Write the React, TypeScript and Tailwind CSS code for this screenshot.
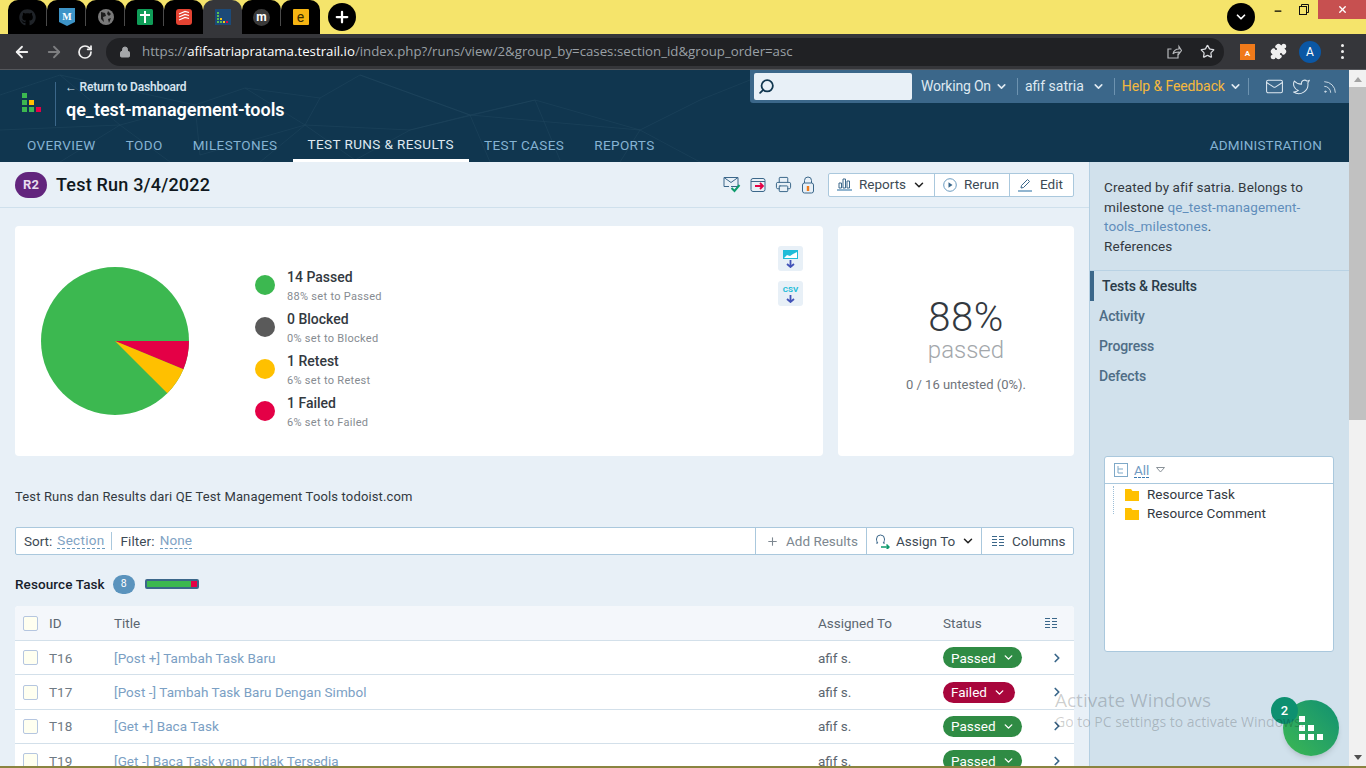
import { FaGithub } from "react-icons/fa";
import {
  ArrowLeft,
  ArrowRight,
  RotateCw,
  Lock,
  Star,
  Puzzle,
  ChevronDown,
  ChevronRight,
  Search,
  Mail,
  Twitter,
  Rss,
  Plus,
  Printer,
  Minus,
  X,
} from "lucide-react";

const sans = "font-['Roboto',sans-serif]";

const navItems = ["OVERVIEW", "TODO", "MILESTONES", "TEST RUNS & RESULTS", "TEST CASES", "REPORTS"];

const legend = [
  { title: "14 Passed", sub: "88% set to Passed", color: "bg-[#3cb850]" },
  { title: "0 Blocked", sub: "0% set to Blocked", color: "bg-[#5a5a5a]" },
  { title: "1 Retest", sub: "6% set to Retest", color: "bg-[#ffc000]" },
  { title: "1 Failed", sub: "6% set to Failed", color: "bg-[#e40046]" },
];

const rows = [
  { id: "T16", title: "[Post +] Tambah Task Baru", status: "Passed" },
  { id: "T17", title: "[Post -] Tambah Task Baru Dengan Simbol", status: "Failed" },
  { id: "T18", title: "[Get +] Baca Task", status: "Passed" },
  { id: "T19", title: "[Get -] Baca Task yang Tidak Tersedia", status: "Passed" },
];

function Tab({ children, active, sep }: { children: React.ReactNode; active?: boolean; sep?: boolean }) {
  return (
    <div
      className={
        "relative flex h-[34px] w-[39px] items-center justify-center rounded-t-[10px] " +
        (active ? "bg-[#35363a]" : "bg-black")
      }
    >
      {children}
      {sep && <span className="absolute right-0 top-[8px] h-[18px] w-px bg-[#4a4a4a]" />}
    </div>
  );
}

function TabStrip() {
  return (
    <div className="flex h-[34px] items-end bg-[#f5e46b] pl-[8px]">
      <div className="flex items-end">
        <Tab sep>
          <FaGithub className="text-[#1f2328]" size={17} />
        </Tab>
        <Tab sep>
          <svg width="16" height="18" viewBox="0 0 16 18">
            <path d="M0 0h16v14l-8 4-8-4z" fill="#3d94c8" />
            <text x="8" y="11.5" fontSize="10" fontWeight="700" fill="#fff" textAnchor="middle" fontFamily="Liberation Serif">
              M
            </text>
          </svg>
        </Tab>
        <Tab sep>
          <svg width="16" height="16" viewBox="0 0 16 16">
            <circle cx="8" cy="8" r="8" fill="#7a7a7a" />
            <path d="M3 3l4 1 1 3-3 1 1 5-3-3zM10 2l3 3-2 2-2-2zM10 10l3-1-2 5z" fill="#1c1c1c" />
          </svg>
        </Tab>
        <Tab sep>
          <svg width="16" height="16" viewBox="0 0 16 16">
            <rect width="16" height="16" rx="1.5" fill="#0f9d58" />
            <path d="M7 2h2v3h4v2H9v7H7V7H3V5h4z" fill="#fff" />
          </svg>
        </Tab>
        <Tab>
          <svg width="16" height="16" viewBox="0 0 16 16">
            <rect width="16" height="16" rx="3" fill="#e44332" />
            <path d="M3 5l6-2.5 4 1M3 8l6-2.5 4 1M3 11l6-2.5 4 1" stroke="#fff" strokeWidth="1.2" fill="none" />
          </svg>
        </Tab>
        <Tab active>
          <svg width="16" height="16" viewBox="0 0 16 16">
            <rect width="16" height="16" fill="#1c4a78" />
            <path d="M2 3h2v2H2zM2 6h2v2H2zM2 9h2v2H2zM2 12h2v2H2zM5 12h2v2H5z" fill="#5cc04e" />
            <path d="M5 9h2v2H5zM8 12h2v2H8z" fill="#f5c518" />
            <path d="M11 12h2v2h-2z" fill="#e40046" />
          </svg>
        </Tab>
        <Tab sep>
          <div className={`flex h-[17px] w-[17px] items-center justify-center rounded-full bg-[#3a3a3a] text-[12px] font-bold leading-none text-white ${sans}`}>
            m
          </div>
        </Tab>
        <Tab>
          <div className={`flex h-[16px] w-[16px] items-center justify-center rounded-[1px] bg-[#f5b412] text-[14px] leading-none text-[#3a2c00] ${sans}`}>
            e
          </div>
        </Tab>
      </div>
      <div className="mb-[3px] ml-[8px] flex h-[28px] w-[28px] items-center justify-center rounded-full bg-black">
        <Plus className="text-white" size={18} strokeWidth={3} />
      </div>
      <div className="mb-[3px] ml-auto flex h-[28px] w-[28px] items-center justify-center rounded-full bg-black">
        <ChevronDown className="text-white" size={14} strokeWidth={3} />
      </div>
      <div className="flex h-[34px] items-start">
        <div className="flex h-[22px] w-[45px] items-center justify-center text-black">
          <Minus size={10} strokeWidth={3} />
        </div>
        <div className="flex h-[19px] w-[18px] items-center">
          <svg width="10" height="11" viewBox="0 0 10 11" fill="none" stroke="#111" className="-ml-[1px]">
            <rect x="0.5" y="2.5" width="7" height="8" />
            <path d="M2.5 2.500V.5h7v8H7.500" />
          </svg>
        </div>
        <div className="flex h-[19px] w-[48px] items-center justify-center bg-[#c75050] text-white">
          <X size={11} strokeWidth={3} />
        </div>
      </div>
    </div>
  );
}

function Toolbar() {
  return (
    <div className="flex h-[36px] items-center border-b border-[#55575b] bg-[#35363a] pl-[13px] pr-[12px]">
      <ArrowLeft className="text-[#f0f0f0]" size={18} strokeWidth={2.4} />
      <ArrowRight className="ml-[14px] text-[#7d7e80]" size={18} strokeWidth={2.4} />
      <RotateCw className="ml-[14px] text-[#f0f0f0]" size={16} strokeWidth={2.6} />
      <div className="ml-[13px] flex h-[28px] w-[1118px] items-center rounded-full bg-[#202124] pl-[13px] pr-[9px] font-['Open_Sans',sans-serif] text-[13.25px]">
        <Lock className="text-[#a4a6a9]" size={12} fill="#a4a6a9" />
        <span className="ml-[11px] text-[#9aa0a6]">https://</span>
        <span className="text-white">afifsatriapratama.testrail.io</span>
        <span className="text-[#9aa0a6]">/index.php?/runs/view/2&amp;group_by=cases:section_id&amp;group_order=asc</span>
        <svg className="ml-auto" width="16" height="16" viewBox="0 0 16 16" fill="none" stroke="#b8babd" strokeWidth="1.2">
          <path d="M12 9.5V14H2V5h3.5M7 10c.5-3 2.5-5 6-5V2.5L15.5 6.5 13 10V8c-3 0-5 .5-6 2z" />
        </svg>
        <Star className="ml-[18px] text-[#dadce0]" size={15} strokeWidth={2} />
      </div>
      <div className={`ml-[16px] flex h-[16px] w-[15px] items-end justify-center bg-[#f07a1a] text-[8px] font-bold leading-[12px] text-white ${sans}`}>
        A
      </div>
      <Puzzle className="ml-[15px] text-[#f0f0f0]" size={17} fill="#f0f0f0" />
      <div className={`ml-[12px] flex h-[22px] w-[22px] items-center justify-center rounded-full bg-[#0b57a4] text-[12px] text-white ${sans}`}>
        A
      </div>
      <div className="ml-[20px] flex flex-col gap-[3px]">
        <span className="h-[3px] w-[3px] rounded-full bg-[#f0f0f0]" />
        <span className="h-[3px] w-[3px] rounded-full bg-[#f0f0f0]" />
        <span className="h-[3px] w-[3px] rounded-full bg-[#f0f0f0]" />
      </div>
    </div>
  );
}

function TopMenu() {
  return (
    <div className="flex h-[33px] w-[599px] items-center rounded-bl-[3px] bg-[#3b678a] pl-[4px] text-[14px] tracking-[-0.2px] text-[#dfe9f1]">
      <div className="flex h-[27px] w-[158px] items-center rounded-[2px] bg-[#e8f0f7] pl-[4px]">
        <Search className="-scale-x-100 text-[#10364f]" size={17} strokeWidth={2.5} />
      </div>
      <span className="ml-[9px]">Working On</span>
      <ChevronDown className="ml-[4px]" size={13} strokeWidth={3} />
      <span className="ml-[9px] h-[17px] w-px bg-[#6d93b0]" />
      <span className="ml-[7px] tracking-[0px]">afif satria</span>
      <ChevronDown className="ml-[8px]" size={13} strokeWidth={3} />
      <span className="ml-[9px] h-[17px] w-px bg-[#6d93b0]" />
      <span className="ml-[7px] tracking-[-0.1px] text-[#f5b93d]">Help &amp; Feedback</span>
      <ChevronDown className="ml-[4px]" size={13} strokeWidth={3} />
      <span className="ml-[6px] h-[17px] w-px bg-[#6d93b0]" />
      <Mail className="ml-[16px]" size={19} strokeWidth={1.3} />
      <Twitter className="ml-[8px]" size={19} strokeWidth={1.3} />
      <Rss className="ml-[11px]" size={16} strokeWidth={1.3} />
    </div>
  );
}

function PageHeader() {
  return (
    <div className={`relative h-[92px] bg-[#10364f] ${sans}`}>
      <svg className="pointer-events-none absolute left-0 top-0" width="750" height="92" fill="none" stroke="#2a5068" strokeWidth="0.6" opacity="0.55">
        <path d="M0 25L60 5 195 35 245 18 320 28 360 5 470 45 535 30 640 60 700 30 750 10M60 5L120 55 195 35 200 85 305 55 260 92M320 28L305 55 355 90 410 60 470 45 490 92M120 55L60 92M535 30L560 90M245 18L305 55 410 60 535 30M470 45L640 60 620 92M0 60L120 55 170 92M360 5L470 45M640 60L700 92" />
      </svg>
      <div className="relative flex h-[60px] justify-between">
        <div className="flex items-center pl-[22px]">
          <svg className="mt-[6px]" width="20" height="20" viewBox="0 0 20 20">
            <path d="M0 0h5v5H0zM0 7h5v5H0zM0 14h5v5H0zM7 14h5v5H7z" fill="#3cb850" />
            <path d="M7 7h5v5H7z" fill="#ffc000" />
            <path d="M14 14h5v5h-5z" fill="#e40046" />
          </svg>
          <div className="ml-[13px] mt-[7px] h-[44px] w-px bg-[#3b678a]" />
          <div className="-mt-[2px] ml-[10px]">
            <div className="-ml-[1px] text-[12px] font-semibold leading-[16px] tracking-[-0.2px] text-[#d5e3ee]">← Return to Dashboard</div>
            <div className="mt-[5px] text-[18px] font-semibold leading-[20px] tracking-[0px] text-white">qe_test-management-tools</div>
          </div>
        </div>
        <TopMenu />
      </div>
      <div className="relative flex h-[32px] pl-[12px] pr-[27px] text-[13.5px] tracking-[0.4px] text-[#85b3d3]">
        {navItems.map((n, i) => (
          <div
            key={n}
            className={
              "flex items-center px-[15px] " +
              (i === 3 ? "border-b-[3px] border-white text-[#dfe9f1]" : "pb-[2px]")
            }
          >
            {n}
          </div>
        ))}
        <div className="ml-auto flex items-center pb-[2px] tracking-[0.2px]">ADMINISTRATION</div>
      </div>
    </div>
  );
}

function PieChart() {
  return (
    <svg width="150" height="150" viewBox="0 0 150 150">
      <circle cx="75" cy="75" r="74" fill="#3cb850" />
      <path d="M75 75L143.4 103.3A74 74 0 0 0 149 75z" fill="#e40046" />
      <path d="M75 75L127.3 127.3A74 74 0 0 0 143.4 103.3z" fill="#ffc000" />
    </svg>
  );
}

function DownloadIcon({ label }: { label: string }) {
  return (
    <div className="flex h-[25px] w-[25px] flex-col items-center justify-center rounded-[3px] bg-[#e8f0f7]">
      {label ? (
        <span className="text-[8px] font-bold leading-[9px] text-[#20bcd8]">{label}</span>
      ) : (
        <svg width="15" height="9" viewBox="0 0 15 9">
          <rect width="15" height="9" fill="#20bcd8" />
          <path d="M1 8l3-3 3 1 3-2 4-2v6z" fill="#fff" />
        </svg>
      )}
      <svg className="mt-[1px]" width="9" height="8" viewBox="0 0 9 8" fill="none" stroke="#4253b8" strokeWidth="1.8">
        <path d="M4.5 0v7M1 4l3.5 3L8 4" />
      </svg>
    </div>
  );
}

function ColumnsIcon() {
  return (
    <svg width="12" height="10" viewBox="0 0 12 10" stroke="#3b678a" strokeWidth="1">
      <path d="M0 .5h5M7 .5h5M0 3.5h5M7 3.5h5M0 6.5h5M7 6.5h5M0 9.5h5M7 9.5h5" />
    </svg>
  );
}

function Checkbox() {
  return <div className="h-[15px] w-[15px] rounded-[2px] border border-[#b5c6e0] bg-[#fffff0]" />;
}

function StatusPill({ status }: { status: string }) {
  const passed = status === "Passed";
  return (
    <div
      className={
        "flex h-[21px] items-center rounded-full pl-[8px] text-[13.5px] text-white " +
        (passed ? "w-[79px] bg-[#2f8b44]" : "w-[72px] bg-[#a8063c]")
      }
    >
      {status}
      <ChevronDown className="ml-[6px]" size={13} strokeWidth={2.6} />
    </div>
  );
}

function MainColumn() {
  return (
    <div className="flex w-[1089px] flex-none flex-col overflow-hidden bg-[#e8f0f7]">
      {/* title bar */}
      <div className="flex h-[46px] flex-none items-center border-b border-[#cfe0ec] pl-[15px] pr-[15px]">
        <div className="flex h-[26px] w-[32px] items-center justify-center rounded-[13px] bg-[#62257d] text-[13px] font-bold text-[#e8dcee]">
          R2
        </div>
        <div className="ml-[9px] text-[18px] font-medium tracking-[0.2px] text-[#101820]">Test Run 3/4/2022</div>
        <div className="ml-auto flex items-center gap-[9px] text-[#3b678a]">
          <svg width="18" height="17" viewBox="0 0 18 17" fill="none">
            <path d="M1 1.5h14v9H8M1 1.5v9h5M1 1.5l7 5 7-5" stroke="#3b678a" />
            <path d="M8.5 12l3 3 5-6" stroke="#0e9b6c" strokeWidth="2" />
          </svg>
          <svg width="16" height="16" viewBox="0 0 16 16" fill="none">
            <rect x="1" y="1.5" width="14" height="13" rx="2" stroke="#3b678a" />
            <path d="M1 4.5h14" stroke="#3b678a" />
            <path d="M5 9h8M10 6l3 3-3 3" stroke="#e40046" strokeWidth="1.8" />
          </svg>
          <Printer size={17} strokeWidth={1.4} />
          <svg width="14" height="18" viewBox="0 0 14 18" fill="none">
            <path d="M3.5 7V4.5a3.5 3.5 0 0 1 7 0V7" stroke="#3b678a" />
            <rect x="1.5" y="7" width="11" height="10" rx="2" stroke="#3b678a" />
            <path d="M7 10v5" stroke="#f07a1a" strokeWidth="2.4" />
          </svg>
        </div>
        <div className="ml-[13px] flex h-[24px] rounded-[2px] border border-[#aac8dd] bg-white text-[13.5px] text-[#3d4a55]">
          <div className="flex w-[105px] items-center pl-[8px]">
            <svg width="15" height="13" viewBox="0 0 15 13" fill="none" stroke="#3b678a">
              <path d="M2 10V5h2.500v5zM6 10V1h2.500v9zM10 10V3h2.500v7z" />
              <path d="M0 12h15" strokeWidth="1.500" stroke="#6c9cc0" />
            </svg>
            <span className="ml-[7px]">Reports</span>
            <ChevronDown className="ml-[6px] text-[#222]" size={14} strokeWidth={2.6} />
          </div>
          <div className="flex w-[75px] items-center border-l border-[#aac8dd] pl-[8px]">
            <svg width="14" height="14" viewBox="0 0 14 14">
              <circle cx="7" cy="7" r="6.3" fill="none" stroke="#6c9cc0" />
              <path d="M5.5 4.3v5.4L9.5 7z" fill="#3b678a" />
            </svg>
            <span className="ml-[7px]">Rerun</span>
          </div>
          <div className="flex w-[64px] items-center border-l border-[#aac8dd] pl-[8px]">
            <svg width="14" height="14" viewBox="0 0 14 14" fill="none">
              <path d="M3 10l.5-2.500L9.500 1.500l2 2L5.500 9.500z" stroke="#3b678a" />
              <path d="M0 13h14" stroke="#6c9cc0" strokeWidth="1.500" />
            </svg>
            <span className="ml-[8px]">Edit</span>
          </div>
        </div>
      </div>

      {/* stats */}
      <div className="mt-[18px] flex flex-none gap-[15px] pl-[15px] pr-[15px]">
        <div className="flex h-[230px] w-[808px] rounded-[4px] bg-white">
          <div className="ml-[25px] mt-[40px]">
            <PieChart />
          </div>
          <div className="ml-[65px] mt-[38px] flex flex-col">
            {legend.map((l) => (
              <div key={l.title} className="flex h-[42px] items-center">
                <div className={`h-[20px] w-[20px] rounded-full ${l.color}`} />
                <div className="ml-[12px] pt-[1px]">
                  <div className="text-[14px] font-medium leading-[18px] text-[#33393f]">{l.title}</div>
                  <div className="mt-[4px] text-[11px] leading-[14px] tracking-[0.3px] text-[#868b91]">{l.sub}</div>
                </div>
              </div>
            ))}
          </div>
          <div className="ml-auto mr-[20px] mt-[20px] flex flex-col gap-[10px]">
            <DownloadIcon label="" />
            <DownloadIcon label="CSV" />
          </div>
        </div>
        <div className="flex h-[230px] w-[236px] flex-col items-center rounded-[4px] bg-white pl-[20px] pt-[67px]">
          <div className="text-[40px] font-light leading-[50px] tracking-[0.5px] text-[#33393f]">88%</div>
          <div className="-mt-[6px] text-[24px] font-light leading-[26px] text-[#a3a7ab]">passed</div>
          <div className="mt-[12px] text-[13px] text-[#6f757b]">0 / 16 untested (0%).</div>
        </div>
      </div>

      <div className="ml-[15px] mt-[32px] flex-none text-[13px] leading-[18px] tracking-[0.15px] text-[#33393f]">
        Test Runs dan Results dari QE Test Management Tools todoist.com
      </div>

      {/* filter bar */}
      <div className="ml-[15px] mr-[15px] mt-[21px] flex h-[28px] flex-none items-center rounded-[2px] border border-[#aac8dd] bg-white text-[13.5px] text-[#3d4a55]">
        <span className="ml-[8px]">Sort:</span>
        <span className="ml-[5px] border-b border-dashed border-[#6c9cc0] leading-[15px] tracking-[0.3px] text-[#7fa3c4]">Section</span>
        <span className="ml-[6px] h-[18px] w-px bg-[#aac8dd]" />
        <span className="ml-[9px] tracking-[0.1px]">Filter:</span>
        <span className="ml-[5px] border-b border-dashed border-[#6c9cc0] leading-[15px] tracking-[0.1px] text-[#7fa3c4]">None</span>
        <div className="ml-auto flex h-full w-[111px] items-center border-l border-[#aac8dd] pl-[10px] text-[#7d8790]">
          <Plus size={13} strokeWidth={2} />
          <span className="ml-[7px]">Add Results</span>
        </div>
        <div className="flex h-full w-[115px] items-center border-l border-[#aac8dd] pl-[8px]">
          <svg width="15" height="15" viewBox="0 0 15 15" fill="none">
            <path d="M1 9h2c-1-1-1.500-2-1.500-4a4 4 0 0 1 8 0c0 2-.5 3-1.500 4h2" stroke="#3b678a" />
            <path d="M6 13h8M11.500 10.500L14 13l-2.500 2.500" stroke="#0e9b6c" strokeWidth="1.500" />
          </svg>
          <span className="ml-[6px]">Assign To</span>
          <ChevronDown className="ml-[6px] text-[#222]" size={14} strokeWidth={2.6} />
        </div>
        <div className="flex h-full w-[92px] items-center border-l border-[#aac8dd] pl-[10px]">
          <ColumnsIcon />
          <span className="ml-[8px]">Columns</span>
        </div>
      </div>

      {/* section head */}
      <div className="ml-[15px] mt-[19px] flex h-[20px] flex-none items-center">
        <span className="text-[13.5px] font-medium tracking-[0.1px] text-[#17212b]">Resource Task</span>
        <span className="ml-[8px] flex h-[19px] w-[22px] items-center justify-center rounded-full bg-[#5a93bd] text-[10.5px] text-white">8</span>
        <div className="ml-[10px] flex h-[10px] w-[54px] rounded-[2px] border-2 border-[#3b678a]">
          <div className="w-[44px] bg-[#3cb850]" />
          <div className="flex-1 bg-[#e40046]" />
        </div>
      </div>

      {/* table */}
      <div className="ml-[15px] mr-[15px] mt-[12px] flex-none rounded-t-[4px] bg-white text-[13.5px]">
        <div className="flex h-[35px] items-center rounded-t-[4px] border-b border-[#d3e0ea] bg-[#f4f7fb] text-[#5b6670]">
          <div className="ml-[8px]">
            <Checkbox />
          </div>
          <span className="ml-[11px] w-[65px]">ID</span>
          <span className="w-[704px]">Title</span>
          <span className="w-[125px]">Assigned To</span>
          <span className="w-[102px]">Status</span>
          <ColumnsIcon />
        </div>
        {rows.map((r) => (
          <div key={r.id} className="flex h-[34.4px] items-center border-b border-[#d3e0ea]">
            <div className="ml-[8px]">
              <Checkbox />
            </div>
            <span className="ml-[11px] w-[65px] text-[#6f7a84]">{r.id}</span>
            <span className="w-[704px] tracking-[0.05px] text-[#7ba0c4]">{r.title}</span>
            <span className="w-[125px] text-[#5b6670]">afif s.</span>
            <div className="w-[107px]">
              <StatusPill status={r.status} />
            </div>
            <ChevronRight className="text-[#3b678a]" size={14} strokeWidth={3} />
          </div>
        ))}
      </div>
    </div>
  );
}

function Sidebar() {
  return (
    <div className="flex w-[260px] flex-none flex-col border-l border-[#b4cfe2] bg-[#d1e1ec] text-[13.5px] text-[#33393f]">
      <div className="h-[109px] border-b border-[#b9d2e4] pl-[14px] pr-[20px] pt-[16px] leading-[19.5px] tracking-[0.1px]">
        Created by afif satria. Belongs to milestone <span className="text-[#5f8dbb]">qe_test-management-tools_milestones</span>.
        <div>References</div>
      </div>
      <div className="flex flex-col text-[14px] font-medium tracking-[-0.15px] text-[#4f6d86]">
        <div className="flex h-[30px] items-center border-l-4 border-[#3b678a] pl-[8px] text-[#2a3b49]">Tests &amp; Results</div>
        <div className="flex h-[30px] items-center pl-[9px]">Activity</div>
        <div className="flex h-[30px] items-center pl-[9px]">Progress</div>
        <div className="flex h-[30px] items-center pl-[9px]">Defects</div>
      </div>
      <div className="ml-[14px] mt-[65px] h-[196px] w-[230px] rounded-[3px] border border-[#aac8dd] bg-white">
        <div className="flex h-[27px] items-center border-b border-[#aac8dd] pl-[9px]">
          <svg width="14" height="14" viewBox="0 0 14 14" fill="none" stroke="#7fa9c8">
            <rect x=".5" y=".5" width="13" height="13" />
            <path d="M4 3v7h5M4 6h5" />
          </svg>
          <span className="ml-[6px] border-b border-dashed border-[#3b7ab0] leading-[14px] text-[#6f9ac2]">All</span>
          <svg className="ml-[7px]" width="9" height="6" viewBox="0 0 9 6" fill="none" stroke="#8a9299">
            <path d="M.5.5h8L4.500 5z" />
          </svg>
        </div>
        <div className="relative pl-[20px] pt-[1px]">
          <div className="absolute left-[8px] top-[2px] h-[28px] border-l border-dotted border-[#9dbfd8]" />
          {["Resource Task", "Resource Comment"].map((s) => (
            <div key={s} className="flex h-[19px] items-center">
              <svg width="14" height="12" viewBox="0 0 14 12">
                <path d="M0 0h6l1.500 2H14v10H0z" fill="#ffc000" />
              </svg>
              <span className="ml-[8px]">{s}</span>
            </div>
          ))}
        </div>
      </div>
    </div>
  );
}

function Scrollbar() {
  return (
    <div className="flex w-[17px] flex-col items-center bg-[#f1f1f1]">
      <div className="mt-[7px] h-0 w-0 border-x-4 border-b-[5px] border-x-transparent border-b-[#a3a3a3]" />
      <div className="mt-[5px] h-[333px] w-full bg-[#c1c1c1]" />
      <div className="mb-[6px] mt-auto h-0 w-0 border-x-4 border-t-[5px] border-x-transparent border-t-[#505050]" />
    </div>
  );
}

export default function App() {
  return (
    <div className="relative flex h-screen w-full flex-col overflow-hidden">
      <TabStrip />
      <Toolbar />
      <div className={`flex min-h-0 flex-1 ${sans}`}>
        <div className="flex w-[1349px] flex-col">
          <PageHeader />
          <div className="flex min-h-0 flex-1">
            <MainColumn />
            <Sidebar />
          </div>
        </div>
        <Scrollbar />
      </div>
      <div className="h-[2px] flex-none bg-[#8a8440]" />

      {/* chat bubble */}
      <div className="absolute left-[1283px] top-[700px] flex h-[56px] w-[56px] items-center justify-center rounded-full bg-gradient-to-tr from-[#3cb850] to-[#0e9070] shadow-md">
        <svg width="24" height="24" viewBox="0 0 24 24" fill="#fff">
          <path d="M0 0h6v6H0zM0 9h6v6H0zM9 9h6v6H9zM0 18h6v6H0zM9 18h6v6H9zM18 18h6v6h-6z" />
        </svg>
      </div>
      <div className={`absolute left-[1271px] top-[697px] flex h-[27px] w-[27px] items-center justify-center rounded-full bg-[#0e9070] text-[13px] font-medium text-white ${sans}`}>
        2
      </div>

      {/* windows watermark */}
      <div className="pointer-events-none absolute left-[1055px] top-[688px] font-['Open_Sans',sans-serif] text-[#00000033]">
        <div className="text-[19px] leading-[24px]">Activate Windows</div>
        <div className="mt-[1px] whitespace-nowrap text-[14px] leading-[18px]">Go to PC settings to activate Windows.</div>
      </div>
    </div>
  );
}
